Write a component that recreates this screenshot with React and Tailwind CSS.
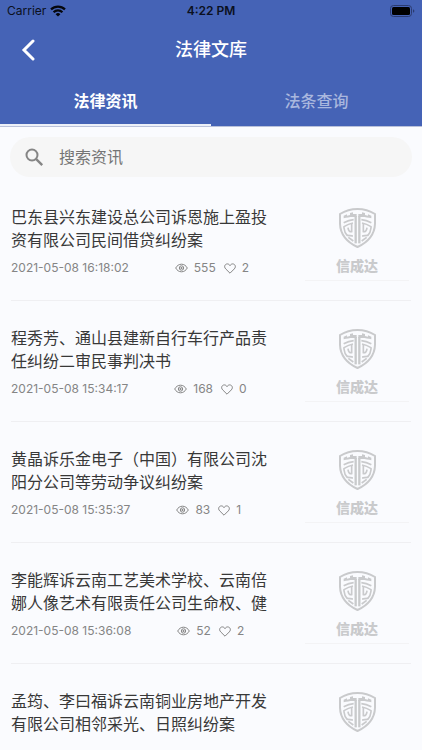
import { useState } from "react";

const articles = [
  {
    title: "巴东县兴东建设总公司诉恩施上盈投资有限公司民间借贷纠纷案",
    date: "2021-05-08 16:18:02",
    views: 555,
    likes: 2,
    caption: "信成达",
  },
  {
    title: "程秀芳、通山县建新自行车行产品责任纠纷二审民事判决书",
    date: "2021-05-08 15:34:17",
    views: 168,
    likes: 0,
    caption: "信成达",
  },
  {
    title: "黄晶诉乐金电子（中国）有限公司沈阳分公司等劳动争议纠纷案",
    date: "2021-05-08 15:35:37",
    views: 83,
    likes: 1,
    caption: "信成达",
  },
  {
    title: "李能辉诉云南工艺美术学校、云南倍娜人像艺术有限责任公司生命权、健",
    date: "2021-05-08 15:36:08",
    views: 52,
    likes: 2,
    caption: "信成达",
  },
  {
    title: "孟筠、李曰福诉云南铜业房地产开发有限公司相邻采光、日照纠纷案",
  },
];

const tabs = ["法律资讯", "法条查询"];

function StatusBar() {
  return (
    <div className="grid grid-cols-3 items-center h-[22px] px-[7px] text-xs leading-[22px] text-[#0b1020]">
      <div className="flex items-center gap-1">
        <span>Carrier</span>
        <svg width="16" height="12" viewBox="0 0 16 12" fill="none" stroke="#05070d" strokeWidth="2.2">
          <path d="M1 4.4a10 10 0 0 1 14 0" />
          <path d="M3.6 7.2a6.2 6.2 0 0 1 8.8 0" />
          <path d="M8 11.6 5.6 9.2a3.4 3.4 0 0 1 4.8 0z" fill="#05070d" stroke="none" />
        </svg>
      </div>
      <span className="text-center font-semibold">4:22 PM</span>
      <div className="flex justify-end">
        <svg width="25" height="12" viewBox="0 0 25 12">
          <rect x="0.5" y="0.5" width="21" height="11" rx="3" fill="none" stroke="#2b3b70" />
          <rect x="2" y="2" width="18" height="8" rx="1.5" fill="#000" />
          <path d="M23 4.2v3.6q1.4-.5 1.4-1.8T23 4.2z" fill="#2b3b70" />
        </svg>
      </div>
    </div>
  );
}

function EyeIcon() {
  return (
    <svg width="13" height="10" viewBox="0 0 13 10" fill="none" stroke="#858585">
      <path d="M.7 5C2 2.6 4 1.2 6.5 1.2S11 2.6 12.3 5C11 7.4 9 8.8 6.5 8.8S2 7.4.7 5z" />
      <circle cx="6.5" cy="5" r="2.2" />
      <circle cx="6.5" cy="5" r="1.1" fill="#858585" stroke="none" />
    </svg>
  );
}

function HeartIcon() {
  return (
    <svg width="12" height="11" viewBox="0 0 12 11" fill="none" stroke="#858585">
      <path d="M6 10.2 1.7 5.9C-.6 3.4 1.3.9 3.3.9 4.6.9 5.5 1.7 6 2.6 6.5 1.7 7.4.9 8.7.9c2 0 3.9 2.5 1.6 5z" />
    </svg>
  );
}

// Left half of the shield pattern, mirrored for the right one
function HalfEmblem() {
  return (
    <>
      <path d="M14 31V23l10-4v4l9-2v-6l9-2v5h11v9H42c-10 0-19 2-28 4z" fill="#c9cacc" stroke="none" />
      <path d="M50 24V106" strokeWidth="7" />
      <path d="M44 35C33 36 24 39 14 44" />
      <path d="M42 45C32 47 23 51 15 56V60C16 70 19 77 25 83" />
      <path d="M38 46V71C33 72 28 69 27 59" />
      <path d="M24 82C30 82 37 84 42 84" />
      <path d="M28 88 43 99" />
    </>
  );
}

function Logo({ caption }) {
  return (
    <div className="flex flex-col items-center w-[104px] h-[75px] mr-[2px] pt-[2px] shrink-0 border-b border-[#f3f3f5]">
      <svg width="37" height="40" viewBox="0 0 111 120" fill="none" stroke="#c9cacc" strokeWidth="5">
        <path
          d="M55.5 3C38 3 19 8 3 18V47C4 80 26 103 55.5 117C85 103 107 80 108 47V18C92 8 73 3 55.5 3z"
          strokeWidth="6"
        />
        <HalfEmblem />
        <g transform="matrix(-1 0 0 1 111 0)">
          <HalfEmblem />
        </g>
      </svg>
      {caption && (
        <span className="mt-2 text-[14px] leading-5 font-black text-[#c9cacc]">{caption}</span>
      )}
    </div>
  );
}

function Article({ article }) {
  return (
    <li className="flex items-start justify-between h-[121px] border-b border-[#efeff2] pt-[26px]">
      <a href="#" className="w-[264px] shrink-0">
        <h2 className="text-base leading-[23px] text-[#383838] line-clamp-2">{article.title}</h2>
        {article.date && (
          <div className="flex items-center mt-2 text-xs leading-4 text-[#858585]">
            <time>{article.date}</time>
            <span className="flex items-center gap-[6px] ml-[46px]">
              <EyeIcon />
              {article.views}
            </span>
            <span className="flex items-center gap-[6px] ml-2">
              <HeartIcon />
              {article.likes}
            </span>
          </div>
        )}
      </a>
      <Logo caption={article.caption} />
    </li>
  );
}

export default function App() {
  const [active, setActive] = useState(0);

  return (
    <div className="flex flex-col h-screen overflow-hidden bg-[#fafbfe] font-[Inter,'Noto_Sans_CJK_SC',sans-serif]">
      <header className="bg-[#4563b6] border-b border-[#b9c1da] text-white">
        <StatusBar />
        <div className="grid grid-cols-[40px_1fr_40px] items-center h-[55px] px-2">
          <button type="button" aria-label="返回" className="flex justify-center">
            <svg width="14" height="22" viewBox="0 0 14 22" fill="none" stroke="#fff" strokeWidth="3">
              <path d="M12 2 3 11l9 9" strokeLinecap="round" />
            </svg>
          </button>
          <h1 className="text-center text-lg font-medium">法律文库</h1>
        </div>
        {/* Tabs */}
        <nav className="grid grid-cols-2 h-[49px]">
          {tabs.map((tab, index) => (
            <button
              key={tab}
              type="button"
              onClick={() => setActive(index)}
              className={
                active === index
                  ? "border-b-2 border-[#edf0f8] text-base font-bold text-white"
                  : "border-b-2 border-transparent text-base font-medium text-[#a9b7de]"
              }
            >
              {tab}
            </button>
          ))}
        </nav>
      </header>

      {/* Search */}
      <label className="flex items-center gap-[15px] h-10 mx-[10px] mt-[10px] px-[15px] shrink-0 rounded-full bg-[#f6f6f6]">
        <svg width="19" height="19" viewBox="0 0 19 19" fill="none" stroke="#858585" strokeWidth="2">
          <circle cx="7" cy="7" r="5.5" />
          <path d="m11.2 11.2 6 6" strokeWidth="2.4" />
        </svg>
        <input
          type="text"
          aria-label="搜索资讯"
          placeholder="搜索资讯"
          className="flex-1 min-w-0 bg-transparent text-base outline-none placeholder:text-[#757575]"
        />
      </label>

      <ul className="flex-1 mt-[3px] mx-[11px] overflow-hidden">
        {articles.map((article) => (
          <Article key={article.title} article={article} />
        ))}
      </ul>
    </div>
  );
}
